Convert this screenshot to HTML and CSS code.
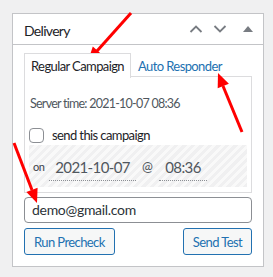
FILE: index.html
```html
<!DOCTYPE html>
<html lang="en">
<head>
  <meta charset="UTF-8" />
  <title>Delivery</title>
  <link rel="stylesheet" href="styles.css">
</head>
<body>
  <div class="postbox">
    <div class="postbox-header">
      <h2>Delivery</h2>
      <div class="handle-actions">
        <button class="handle-order">
          <svg width="14" height="8" viewBox="0 0 14 8"><polyline points="1.5,7 7,1.5 12.5,7" /></svg>
        </button>
        <button class="handle-order">
          <svg width="14" height="8" viewBox="0 0 14 8"><polyline points="1.5,1 7,6.5 12.5,1" /></svg>
        </button>
        <button class="toggle">
          <svg width="10" height="6" viewBox="0 0 10 6"><polygon points="5,0 10,6 0,6" /></svg>
        </button>
      </div>
    </div>

    <div class="inside">
      <ul class="tabs">
        <li class="tab active">Regular Campaign</li>
        <li class="tab"><a href="#">Auto Responder</a></li>
      </ul>
      <div class="tab-panel">
        <p class="server-time">Server time: 2021-10-07 08:36</p>
        <label class="check-row">
          <span class="checkbox"></span>
          send this campaign
        </label>
        <div class="schedule">
          <span class="on">on</span>
          <span class="field date">2021-10-07</span>
          <span class="at">@</span>
          <span class="field time">08:36</span>
        </div>
      </div>
      <div class="email">demo@gmail.com</div>
      <div class="actions">
        <button class="btn">Run Precheck</button>
        <button class="btn">Send Test</button>
      </div>
    </div>
  </div>

  <!-- annotation arrows -->
  <svg class="arrows" width="273" height="277" viewBox="0 0 273 277">
    <line x1="131" y1="13" x2="97" y2="51" />
    <polygon points="88,61 101.8,54.6 92.8,46.6" />
    <line x1="242" y1="132" x2="223" y2="86" />
    <polygon points="218,73 228.9,83.7 217.7,88.3" />
    <line x1="14" y1="143" x2="32" y2="190" />
    <polygon points="37,203 37.6,187.7 26.4,192.1" />
  </svg>
</body>
</html>
```

FILE: styles.css
```css
* {
  box-sizing: border-box;
  margin: 0;
  padding: 0;
}
body {
  font-family: 'Lato', 'Liberation Sans', sans-serif;
  font-size: 13px;
  letter-spacing: -0.6px;
  color: #1d2327;
  background-color: #f0f0f1;
  padding: 13px 9px 0 12px;
  position: relative;
  height: 277px;
}
.postbox {
  width: 252px;
  background: #fff;
  border: 1px solid #c3c4c7;
}
.postbox-header {
  height: 31px;
  display: flex;
  justify-content: space-between;
  align-items: center;
  border-bottom: 1px solid #c3c4c7;
  padding-left: 11px;
}
.postbox-header h2 {
  font-size: 14px;
  font-weight: 400;
  letter-spacing: -0.7px;
  margin-top: 2px;
}
.handle-actions {
  display: flex;
  height: 100%;
}
.handle-actions button {
  background: none;
  border: none;
  height: 100%;
  display: flex;
  align-items: center;
  justify-content: center;
}
.handle-order {
  width: 24px;
}
.handle-order svg polyline {
  fill: none;
  stroke: #787c82;
  stroke-width: 1.8;
}
.toggle {
  width: 31px;
}
.toggle svg polygon {
  fill: #787c82;
}
.inside {
  padding: 8px 11px 11px;
}
.tabs {
  list-style: none;
  display: flex;
  height: 24px;
  margin-bottom: -1px;
  white-space: nowrap;
}
.tab {
  padding: 0 6px;
  line-height: 24px;
  border: 1px solid transparent;
  border-bottom: none;
}
.tab.active {
  border-color: #dcdcde;
  background: #fff;
  height: 25px;
  position: relative;
  z-index: 1;
}
.tab a {
  color: #2271b1;
  text-decoration: none;
}
.tab-panel {
  border: 1px solid #dcdcde;
  padding: 18px 4px 5px;
}
.server-time {
  color: #50575e;
  padding-left: 1px;
  line-height: 18px;
  font-size: 12.5px;
  letter-spacing: -0.75px;
}
.check-row {
  display: flex;
  align-items: center;
  gap: 8px;
  margin-top: 14px;
  height: 16px;
}
.checkbox {
  width: 15px;
  height: 15px;
  border: 1px solid #8c8f94;
  border-radius: 4px;
}
.schedule {
  margin-top: 2px;
  height: 42px;
  display: flex;
  align-items: center;
  padding-left: 4px;
  background: repeating-linear-gradient(-45deg, #f0f0f1 0 3px, #f9f9f9 3px 6px);
}
.on {
  font-size: 11px;
  color: #3c434a;
  margin-right: 5px;
}
.field {
  font-size: 15px;
  color: #50575e;
  padding: 2px 6px 4px;
  border-bottom: 1px dotted #8c8f94;
  margin-top: 4px;
}
.at {
  color: #50575e;
  margin: 0 7px 0 6px;
}
.email {
  margin-top: 4px;
  height: 26px;
  border: 1px solid #8c8f94;
  border-radius: 4px;
  padding: 0 7px;
  line-height: 24px;
  font-size: 14px;
  color: #2c3338;
  letter-spacing: -0.3px;
}
.actions {
  display: flex;
  justify-content: space-between;
  margin-top: 5px;
}
.btn {
  font-family: inherit;
  font-size: 13px;
  letter-spacing: inherit;
  color: #2271b1;
  background: #f6f7f7;
  border: 1px solid #2271b1;
  border-radius: 3px;
  height: 27px;
  padding: 0 9px;
}
.arrows {
  position: absolute;
  top: 0;
  left: 0;
  pointer-events: none;
}
.arrows line {
  stroke: #f00;
  stroke-width: 3;
}
.arrows polygon {
  fill: #f00;
}
```
